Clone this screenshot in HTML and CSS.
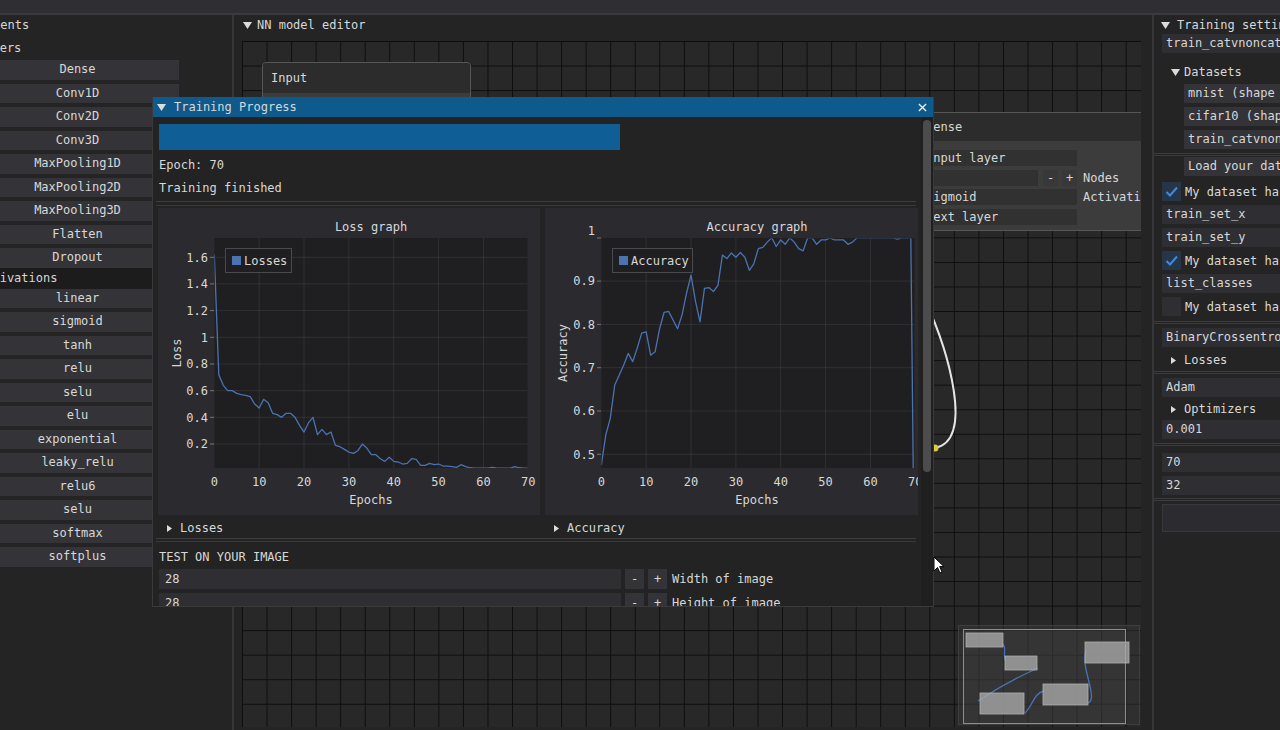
FILE: index.html
```html
<!DOCTYPE html>
<html lang="en">
<head>
<meta charset="utf-8">
<title>NN model editor</title>
<link rel="stylesheet" href="styles.css">
</head>
<body>
<div class="app">
  <div class="topbar"></div>
  <div class="main">
    <aside class="left">
      <div class="tree-row root">Components</div>
      <div class="tree-row sub">Layers</div>
      <div class="btn-list layers">
        <div class="lbtn">Dense</div>
        <div class="lbtn">Conv1D</div>
        <div class="lbtn">Conv2D</div>
        <div class="lbtn">Conv3D</div>
        <div class="lbtn">MaxPooling1D</div>
        <div class="lbtn">MaxPooling2D</div>
        <div class="lbtn">MaxPooling3D</div>
        <div class="lbtn">Flatten</div>
        <div class="lbtn">Dropout</div>
      </div>
      <div class="tree-row act">Activations</div>
      <div class="btn-list acts">
        <div class="lbtn">linear</div>
        <div class="lbtn">sigmoid</div>
        <div class="lbtn">tanh</div>
        <div class="lbtn">relu</div>
        <div class="lbtn">selu</div>
        <div class="lbtn">elu</div>
        <div class="lbtn">exponential</div>
        <div class="lbtn">leaky_relu</div>
        <div class="lbtn">relu6</div>
        <div class="lbtn">selu</div>
        <div class="lbtn">softmax</div>
        <div class="lbtn">softplus</div>
      </div>
    </aside>

    <section class="editor">
      <div class="panel-title"><svg class="tri-down" viewBox="0 0 9 7"><polygon points="0,0 9,0 4.5,7"/></svg><span>NN model editor</span></div>
      <div class="canvas">
        <div class="node node-input">
          <div class="node-title tall">Input</div>
          <div class="node-body"></div>
        </div>
        <div class="node node-dense">
          <div class="node-title">Dense</div>
          <div class="node-body">
            <div class="nrow"><div class="nfield wide">Input layer</div></div>
            <div class="nrow"><div class="nfield narrow"></div><div class="nbtn">-</div><div class="nbtn">+</div><span class="nlabel">Nodes</span></div>
            <div class="nrow"><div class="nfield wide">Sigmoid</div><span class="nlabel">Activation</span></div>
            <div class="nrow"><div class="nfield wide">Next layer</div></div>
          </div>
        </div>
        <svg class="links" viewBox="0 0 899 686">
          <path d="M 683 259 C 706 309, 733 399, 693 407" fill="none" stroke="#e6e6e6" stroke-width="2"/>
          <circle cx="693" cy="407" r="3.5" fill="#d8cc3a"/>
        </svg>
        <svg class="minimap" viewBox="0 0 182 100">
          <rect x="0.5" y="0.5" width="181" height="99" fill="rgba(55,55,55,0.45)" stroke="#3e3e3e"/>
          <rect x="5.5" y="4.5" width="162" height="94" fill="rgba(70,70,70,0.25)" stroke="#8e8e8e"/>
          <g fill="none" stroke="#4a74b4" stroke-width="1.3">
            <path d="M 45 19 C 49 25, 44 31, 48 36"/>
            <path d="M 80 43 C 60 52, 38 64, 20 76"/>
            <path d="M 67 88 C 75 80, 76 68, 86 66"/>
            <path d="M 130 78 C 141 74, 122 42, 128 26"/>
          </g>
          <g fill="rgba(170,170,170,0.78)" stroke="#b0b0b0" stroke-width="0.8">
            <rect x="8" y="8" width="37" height="14"/>
            <rect x="47" y="31" width="32" height="14"/>
            <rect x="127" y="17" width="44" height="21"/>
            <rect x="22" y="68" width="44" height="21"/>
            <rect x="85" y="59" width="45" height="21"/>
          </g>
        </svg>
      </div>
    </section>

    <aside class="right">
      <div class="rp-title"><svg class="tri-down" viewBox="0 0 9 7"><polygon points="0,0 9,0 4.5,7"/></svg><span>Training settings</span></div>
      <div class="field f-first">train_catvnoncat</div>
      <div class="rhdr h-datasets"><span class="slot"><svg class="tri-down" viewBox="0 0 9 7"><polygon points="0,0 9,0 4.5,7"/></svg></span>Datasets</div>
      <div class="field sub-item">mnist (shape (60000, 28, 28))</div>
      <div class="field sub-item">cifar10 (shape (50000, 32, 32, 3))</div>
      <div class="field sub-item">train_catvnoncat</div>
      <div class="rsep s1"></div>
      <div class="field sub-item load">Load your dataset</div>
      <div class="cbrow cb-first"><span class="cb on"><svg viewBox="0 0 19 19"><polyline points="4.5,10 8,13.5 15,5.5" fill="none" stroke="#3d8ae0" stroke-width="2"/></svg></span>My dataset has images</div>
      <div class="field">train_set_x</div>
      <div class="field">train_set_y</div>
      <div class="cbrow"><span class="cb on"><svg viewBox="0 0 19 19"><polyline points="4.5,10 8,13.5 15,5.5" fill="none" stroke="#3d8ae0" stroke-width="2"/></svg></span>My dataset has labels</div>
      <div class="field">list_classes</div>
      <div class="cbrow"><span class="cb"></span>My dataset has classes</div>
      <div class="rsep s2"></div>
      <div class="field">BinaryCrossentropy</div>
      <div class="rhdr h-losses"><span class="slot"><svg class="tri-right" viewBox="0 0 5 7"><polygon points="0,0 5,3.5 0,7"/></svg></span>Losses</div>
      <div class="rsep s3"></div>
      <div class="field">Adam</div>
      <div class="rhdr h-opt"><span class="slot"><svg class="tri-right" viewBox="0 0 5 7"><polygon points="0,0 5,3.5 0,7"/></svg></span>Optimizers</div>
      <div class="field f-lr">0.001</div>
      <div class="rsep s4"></div>
      <div class="field f-ep">70</div>
      <div class="field">32</div>
      <div class="rsep s5"></div>
      <div class="rbutton"></div>
    </aside>
  </div>

  <div class="win">
    <div class="win-title">
      <svg class="tri-down" viewBox="0 0 9 7"><polygon points="0,0 9,0 4.5,7"/></svg>
      <span class="win-name">Training Progress</span>
      <svg class="close" viewBox="0 0 10 10"><path d="M1 1 L9 9 M9 1 L1 9" stroke="#f0f0f0" stroke-width="1.5"/></svg>
    </div>
    <div class="win-body">
      <div class="progress"></div>
      <div class="wtext">Epoch: 70</div>
      <div class="wtext">Training finished</div>
      <div class="wsep"></div>
      <div class="plots">
        <div class="plot">
          <svg viewBox="0 0 382 307" width="382" height="307">
            <defs><clipPath id="clipL"><rect x="56.5" y="30" width="313" height="230"/></clipPath></defs>
            <rect x="56.5" y="30" width="313" height="230" fill="#1f1f21"/>
            <g stroke="rgba(255,255,255,0.08)" stroke-width="1">
              <path d="M101.2 30V260 M146 30V260 M190.9 30V260 M235.7 30V260 M280.6 30V260 M325.5 30V260"/>
              <path d="M56.5 236H369.5 M56.5 209.3H369.5 M56.5 182.7H369.5 M56.5 156H369.5 M56.5 129.3H369.5 M56.5 102.6H369.5 M56.5 75.9H369.5 M56.5 49.3H369.5"/>
            </g>
            <g stroke="rgba(255,255,255,0.35)" stroke-width="1">
              <path d="M52 236H56 M52 209.3H56 M52 182.7H56 M52 156H56 M52 129.3H56 M52 102.6H56 M52 75.9H56 M52 49.3H56"/>
            </g>
            <g clip-path="url(#clipL)">
              <polyline transform="translate(56.3,262.7) scale(4.486,-133.4)" vector-effect="non-scaling-stroke" fill="none" stroke="#4c72b0" stroke-width="1.3" stroke-linejoin="round"
                points="0,1.62 1,0.72 2,0.64 3,0.60 4,0.60 5,0.58 6,0.57 7,0.565 8,0.555 9,0.50 10,0.47 11,0.535 12,0.51 13,0.43 14,0.42 15,0.40 16,0.43 17,0.43 18,0.40 19,0.34 20,0.29 21,0.36 22,0.40 23,0.27 24,0.31 25,0.27 26,0.29 27,0.19 28,0.18 29,0.16 30,0.14 31,0.13 32,0.15 33,0.20 34,0.17 35,0.12 36,0.12 37,0.09 38,0.07 39,0.10 40,0.07 41,0.065 42,0.05 43,0.055 44,0.09 45,0.085 46,0.04 47,0.04 48,0.055 49,0.045 50,0.05 51,0.035 52,0.035 53,0.03 54,0.025 55,0.045 56,0.03 57,0.022 58,0.02 59,0.02 60,0.02 61,0.02 62,0.025 63,0.02 64,0.02 65,0.02 66,0.02 67,0.03 68,0.022 69,0.02 70,0.02"/>
            </g>
            <rect x="67.5" y="40.5" width="66" height="24" fill="#1f1f21" stroke="#4a4a4e"/>
            <rect x="74" y="48" width="9" height="9" fill="#4c72b0"/>
            <g class="ptext">
              <text x="213" y="19" text-anchor="middle" dy=".35em">Loss graph</text>
              <text x="86" y="52.5" dy=".35em">Losses</text>
              <g text-anchor="end">
                <text x="50" y="236" dy=".35em">0.2</text>
                <text x="50" y="209.3" dy=".35em">0.4</text>
                <text x="50" y="182.7" dy=".35em">0.6</text>
                <text x="50" y="156" dy=".35em">0.8</text>
                <text x="50" y="129.3" dy=".35em">1</text>
                <text x="50" y="102.6" dy=".35em">1.2</text>
                <text x="50" y="75.9" dy=".35em">1.4</text>
                <text x="50" y="49.3" dy=".35em">1.6</text>
              </g>
              <g text-anchor="middle">
                <text x="56.3" y="273.7" dy=".35em">0</text>
                <text x="101.2" y="273.7" dy=".35em">10</text>
                <text x="146" y="273.7" dy=".35em">20</text>
                <text x="190.9" y="273.7" dy=".35em">30</text>
                <text x="235.7" y="273.7" dy=".35em">40</text>
                <text x="280.6" y="273.7" dy=".35em">50</text>
                <text x="325.5" y="273.7" dy=".35em">60</text>
                <text x="370.3" y="273.7" dy=".35em">70</text>
                <text x="213" y="292" dy=".35em">Epochs</text>
                <text x="0" y="0" dy=".35em" transform="translate(19,145) rotate(-90)">Loss</text>
              </g>
            </g>
          </svg>
        </div>
        <div class="plot">
          <svg viewBox="0 0 382 307" width="382" height="307">
            <defs><clipPath id="clipA"><rect x="56.5" y="30.4" width="313" height="229.6"/></clipPath></defs>
            <rect x="56.5" y="30" width="313" height="230" fill="#1f1f21"/>
            <g stroke="rgba(255,255,255,0.08)" stroke-width="1">
              <path d="M101.2 30V260 M146 30V260 M190.9 30V260 M235.7 30V260 M280.6 30V260 M325.5 30V260"/>
              <path d="M56.5 246.3H369.5 M56.5 203H369.5 M56.5 159.7H369.5 M56.5 116.4H369.5 M56.5 73.1H369.5"/>
            </g>
            <g stroke="rgba(255,255,255,0.35)" stroke-width="1">
              <path d="M52 246.3H56 M52 203H56 M52 159.7H56 M52 116.4H56 M52 73.1H56 M52 30H56"/>
            </g>
            <g clip-path="url(#clipA)">
              <polyline transform="translate(56.3,462.8) scale(4.486,-433)" vector-effect="non-scaling-stroke" fill="none" stroke="#4c72b0" stroke-width="1.3" stroke-linejoin="round"
                points="0,0.475 1,0.545 2,0.583 3,0.66 4,0.683 5,0.706 6,0.733 7,0.714 8,0.745 9,0.78 10,0.783 11,0.729 12,0.737 13,0.79 14,0.828 15,0.83 16,0.81 17,0.79 18,0.822 19,0.872 20,0.914 21,0.853 22,0.806 23,0.883 24,0.885 25,0.876 26,0.89 27,0.96 28,0.952 29,0.965 30,0.955 31,0.966 32,0.955 33,0.925 34,0.94 35,0.975 36,0.978 37,0.99 38,1 39,0.98 40,0.995 41,0.985 42,1 43,0.99 44,0.975 45,0.97 46,1 47,1 48,0.985 49,0.995 50,0.995 51,1 52,0.995 53,0.995 54,0.995 55,0.985 56,0.99 57,1 58,1 59,1 60,1 61,1 62,1 63,1 64,1 65,1 66,0.997 67,1 68,1 69,1 70,0"/>
            </g>
            <rect x="67.5" y="40.5" width="80" height="24" fill="#1f1f21" stroke="#4a4a4e"/>
            <rect x="74" y="48" width="9" height="9" fill="#4c72b0"/>
            <g class="ptext">
              <text x="212" y="19" text-anchor="middle" dy=".35em">Accuracy graph</text>
              <text x="86" y="52.5" dy=".35em">Accuracy</text>
              <g text-anchor="end">
                <text x="50" y="246.3" dy=".35em">0.5</text>
                <text x="50" y="203" dy=".35em">0.6</text>
                <text x="50" y="159.7" dy=".35em">0.7</text>
                <text x="50" y="116.4" dy=".35em">0.8</text>
                <text x="50" y="73.1" dy=".35em">0.9</text>
                <text x="50" y="23" dy=".35em">1</text>
              </g>
              <g text-anchor="middle">
                <text x="56.3" y="273.7" dy=".35em">0</text>
                <text x="101.2" y="273.7" dy=".35em">10</text>
                <text x="146" y="273.7" dy=".35em">20</text>
                <text x="190.9" y="273.7" dy=".35em">30</text>
                <text x="235.7" y="273.7" dy=".35em">40</text>
                <text x="280.6" y="273.7" dy=".35em">50</text>
                <text x="325.5" y="273.7" dy=".35em">60</text>
                <text x="370.3" y="273.7" dy=".35em">70</text>
                <text x="212" y="292" dy=".35em">Epochs</text>
                <text x="0" y="0" dy=".35em" transform="translate(18,145) rotate(-90)">Accuracy</text>
              </g>
            </g>
          </svg>
        </div>
      </div>
      <div class="hdr-row">
        <div class="hcol"><span class="slot"><svg class="tri-right" viewBox="0 0 5 7"><polygon points="0,0 5,3.5 0,7"/></svg></span>Losses</div>
        <div class="hcol"><span class="slot"><svg class="tri-right" viewBox="0 0 5 7"><polygon points="0,0 5,3.5 0,7"/></svg></span>Accuracy</div>
      </div>
      <div class="wsep sep2"></div>
      <div class="wtext test">TEST ON YOUR IMAGE</div>
      <div class="irow"><div class="ifield">28</div><div class="sbtn">-</div><div class="sbtn">+</div><span class="ilabel">Width of image</span></div>
      <div class="irow"><div class="ifield">28</div><div class="sbtn">-</div><div class="sbtn">+</div><span class="ilabel">Height of image</span></div>
    </div>
    <div class="scroll"><div class="thumb"></div></div>
  </div>

  <svg class="cursor" viewBox="0 0 12 18"><path d="M1 1 L1 15 L4.5 11.5 L7 17 L9 16 L6.7 10.6 L11 10.6 Z" fill="#ffffff" stroke="#000000" stroke-width="1"/></svg>
</div>
</body>
</html>
```

FILE: styles.css
```css
* { box-sizing: border-box; }
html, body { margin: 0; padding: 0; }
body {
  width: 1280px;
  height: 730px;
  overflow: hidden;
  background: #242424;
  color: #d8d8d8;
  font-family: "DejaVu Sans Mono", "Liberation Mono", monospace;
  font-size: 12px;
}
.app { position: relative; width: 1280px; height: 730px; }

.topbar { height: 15px; background: #2e2e33; border-bottom: 2px solid #3a3a3f; }
.main { display: flex; height: 715px; }

.tri-down { width: 9px; height: 7px; fill: #dcdcdc; flex: none; }
.tri-right { width: 5px; height: 7px; fill: #dcdcdc; flex: none; }

/* left components panel */
.left { width: 234px; flex: none; border-right: 2px solid #36363a; overflow: hidden; }
.tree-row { height: 16px; line-height: 16px; white-space: nowrap; }
.tree-row.root { margin: 2px 0 0 -43px; }
.tree-row.sub { margin: 7px 0 0 -22px; }
.tree-row.act { margin: 0; height: 21px; line-height: 21px; text-indent: -22px; background: #1c1c1c; }
.lbtn {
  width: 203px;
  margin: 4px 0 0 -24px;
  height: 19.5px;
  line-height: 19.5px;
  text-align: center;
  background: #343438;
  white-space: nowrap;
}
.acts .lbtn:first-child { margin-top: 0; }

/* node editor */
.editor { width: 920px; flex: none; border-right: 2px solid #36363a; }
.panel-title { margin-top: 2px; height: 16px; display: flex; align-items: center; gap: 5px; padding-left: 9px; }
.canvas {
  position: relative;
  margin: 8px 0 0 8px;
  width: 899px;
  height: 686px;
  overflow: hidden;
  background-color: #282828;
  background-image:
    linear-gradient(90deg, #0e0e0e 1px, transparent 1px),
    linear-gradient(180deg, #0e0e0e 1px, transparent 1px);
  background-size: 24.55px 24.55px;
}
.node {
  position: absolute;
  border: 1px solid #575757;
  border-radius: 4px;
  overflow: hidden;
  background: #3c3c3c;
}
.node-input { left: 20px; top: 21px; width: 209px; height: 120px; }
.node-dense { left: 675px; top: 71px; width: 300px; height: 119px; }
.node-title { height: 28px; line-height: 28px; padding-left: 8px; background: #2c2c2c; }
.node-title.tall { height: 30px; line-height: 30px; }
.node-body { padding: 9px 0 0 4px; }
.nrow { display: flex; align-items: center; height: 16px; margin-bottom: 3.5px; white-space: nowrap; }
.nfield { height: 16px; line-height: 16px; padding-left: 4px; background: #313131; flex: none; }
.nfield.wide { width: 155px; }
.nfield.narrow { width: 116px; }
.nbtn { width: 15px; height: 16px; line-height: 16px; text-align: center; background: #383838; margin-left: 5px; flex: none; }
.nbtn + .nbtn { margin-left: 4px; }
.nlabel { margin-left: 6px; }
.links { position: absolute; left: 0; top: 0; width: 899px; height: 686px; }
.minimap { position: absolute; left: 716px; top: 584px; width: 182px; height: 100px; }

/* right settings panel */
.right { flex: 1; overflow: hidden; padding-left: 8px; white-space: nowrap; }
.rp-title { margin: 2px 0 0 -1px; height: 16px; display: flex; align-items: center; gap: 7px; }
.field {
  width: 200px;
  height: 19px;
  line-height: 19px;
  padding-left: 4px;
  background: #2e2e33;
  margin-top: 4px;
  overflow: hidden;
}
.field.f-first { margin-top: 1px; }
.field.sub-item { margin-left: 22px; background: #333338; }
.field.load { margin-top: 1px; }
.field.f-lr { margin-top: 3px; }
.field.f-ep { margin-top: 7px; }
.rhdr { display: flex; align-items: center; height: 16px; margin-top: 4px; }
.rhdr.h-datasets { margin-top: 11px; }
.rhdr.h-losses { margin-top: 5px; }
.slot { width: 22px; flex: none; display: flex; align-items: center; padding-left: 9px; }
.rsep { height: 3px; border-top: 1px solid #3a3a3f; border-bottom: 1px solid #3a3a3f; margin-top: 4px; width: 200px; margin-left: -8px; }
.rsep.s2 { margin-top: 5px; }
.rsep.s3 { margin-top: 3px; }
.rsep.s5 { margin-top: 3px; }
.cbrow { display: flex; align-items: center; height: 19px; margin-top: 4px; }
.cbrow.cb-first { margin-top: 6px; }
.cb { width: 19px; height: 19px; background: #2e2e33; margin-right: 4px; flex: none; }
.cb.on { background: #263548; }
.cb svg { width: 19px; height: 19px; display: block; }
.rbutton { width: 200px; height: 28px; margin-top: 3px; background: #2c2c30; border: 1px solid #38383d; }

/* training progress window */
.win {
  position: absolute;
  left: 152px;
  top: 97px;
  width: 782px;
  height: 510px;
  background: #232323;
  border: 1px solid #3a3a3a;
  border-top: none;
  overflow: hidden;
}
.win-title {
  height: 20px;
  background: #0e5a8c;
  display: flex;
  align-items: center;
  padding-left: 5px;
  margin: 0 -1px;
}
.win-name { margin-left: 8px; }
.close { width: 9px; height: 9px; margin-left: auto; margin-right: 7px; }
.win-body {
  width: 765px;
  height: 489px;
  overflow: hidden;
  padding: 7px 0 0 5px;
}
.progress { width: 461px; height: 26px; margin-left: 1px; background: #0f5f96; }
.wtext { height: 16px; line-height: 16px; margin: 7px 0 0 1px; white-space: nowrap; }
.wsep { height: 5px; margin-top: 5px; border-top: 1px solid #3e3e3e; border-bottom: 1px solid #3a3a3a; width: 760px; margin-left: -2px; }
.plots { display: flex; gap: 5px; margin-top: 2px; height: 307px; }
.plot { width: 382px; height: 307px; flex: none; background: #2b2b2f; }
.plot svg { display: block; }
.ptext { font-family: "DejaVu Sans Mono", "Liberation Mono", monospace; font-size: 12px; fill: #d8d8d8; }
.hdr-row { display: flex; margin-top: 5px; height: 16px; }
.hcol { width: 387px; flex: none; display: flex; align-items: center; }
.wsep.sep2 { margin-top: 2px; height: 4px; }
.wtext.test { margin-top: 7px; }
.irow { display: flex; align-items: center; height: 20px; margin: 4px 0 0 1px; white-space: nowrap; }
.ifield { width: 462px; height: 20px; line-height: 20px; padding-left: 6px; background: #2e2e33; flex: none; }
.sbtn { width: 19px; height: 20px; line-height: 20px; text-align: center; background: #333338; margin-left: 4px; flex: none; }
.ilabel { margin-left: 5px; }
.scroll { position: absolute; left: 768px; top: 20px; width: 12px; height: 490px; background: #1f1f1f; }
.thumb { margin: 3px 0 0 2px; width: 8px; height: 352px; border-radius: 4px; background: #4c4c4c; }

.cursor { position: absolute; left: 933px; top: 556px; width: 12px; height: 18px; }
```
